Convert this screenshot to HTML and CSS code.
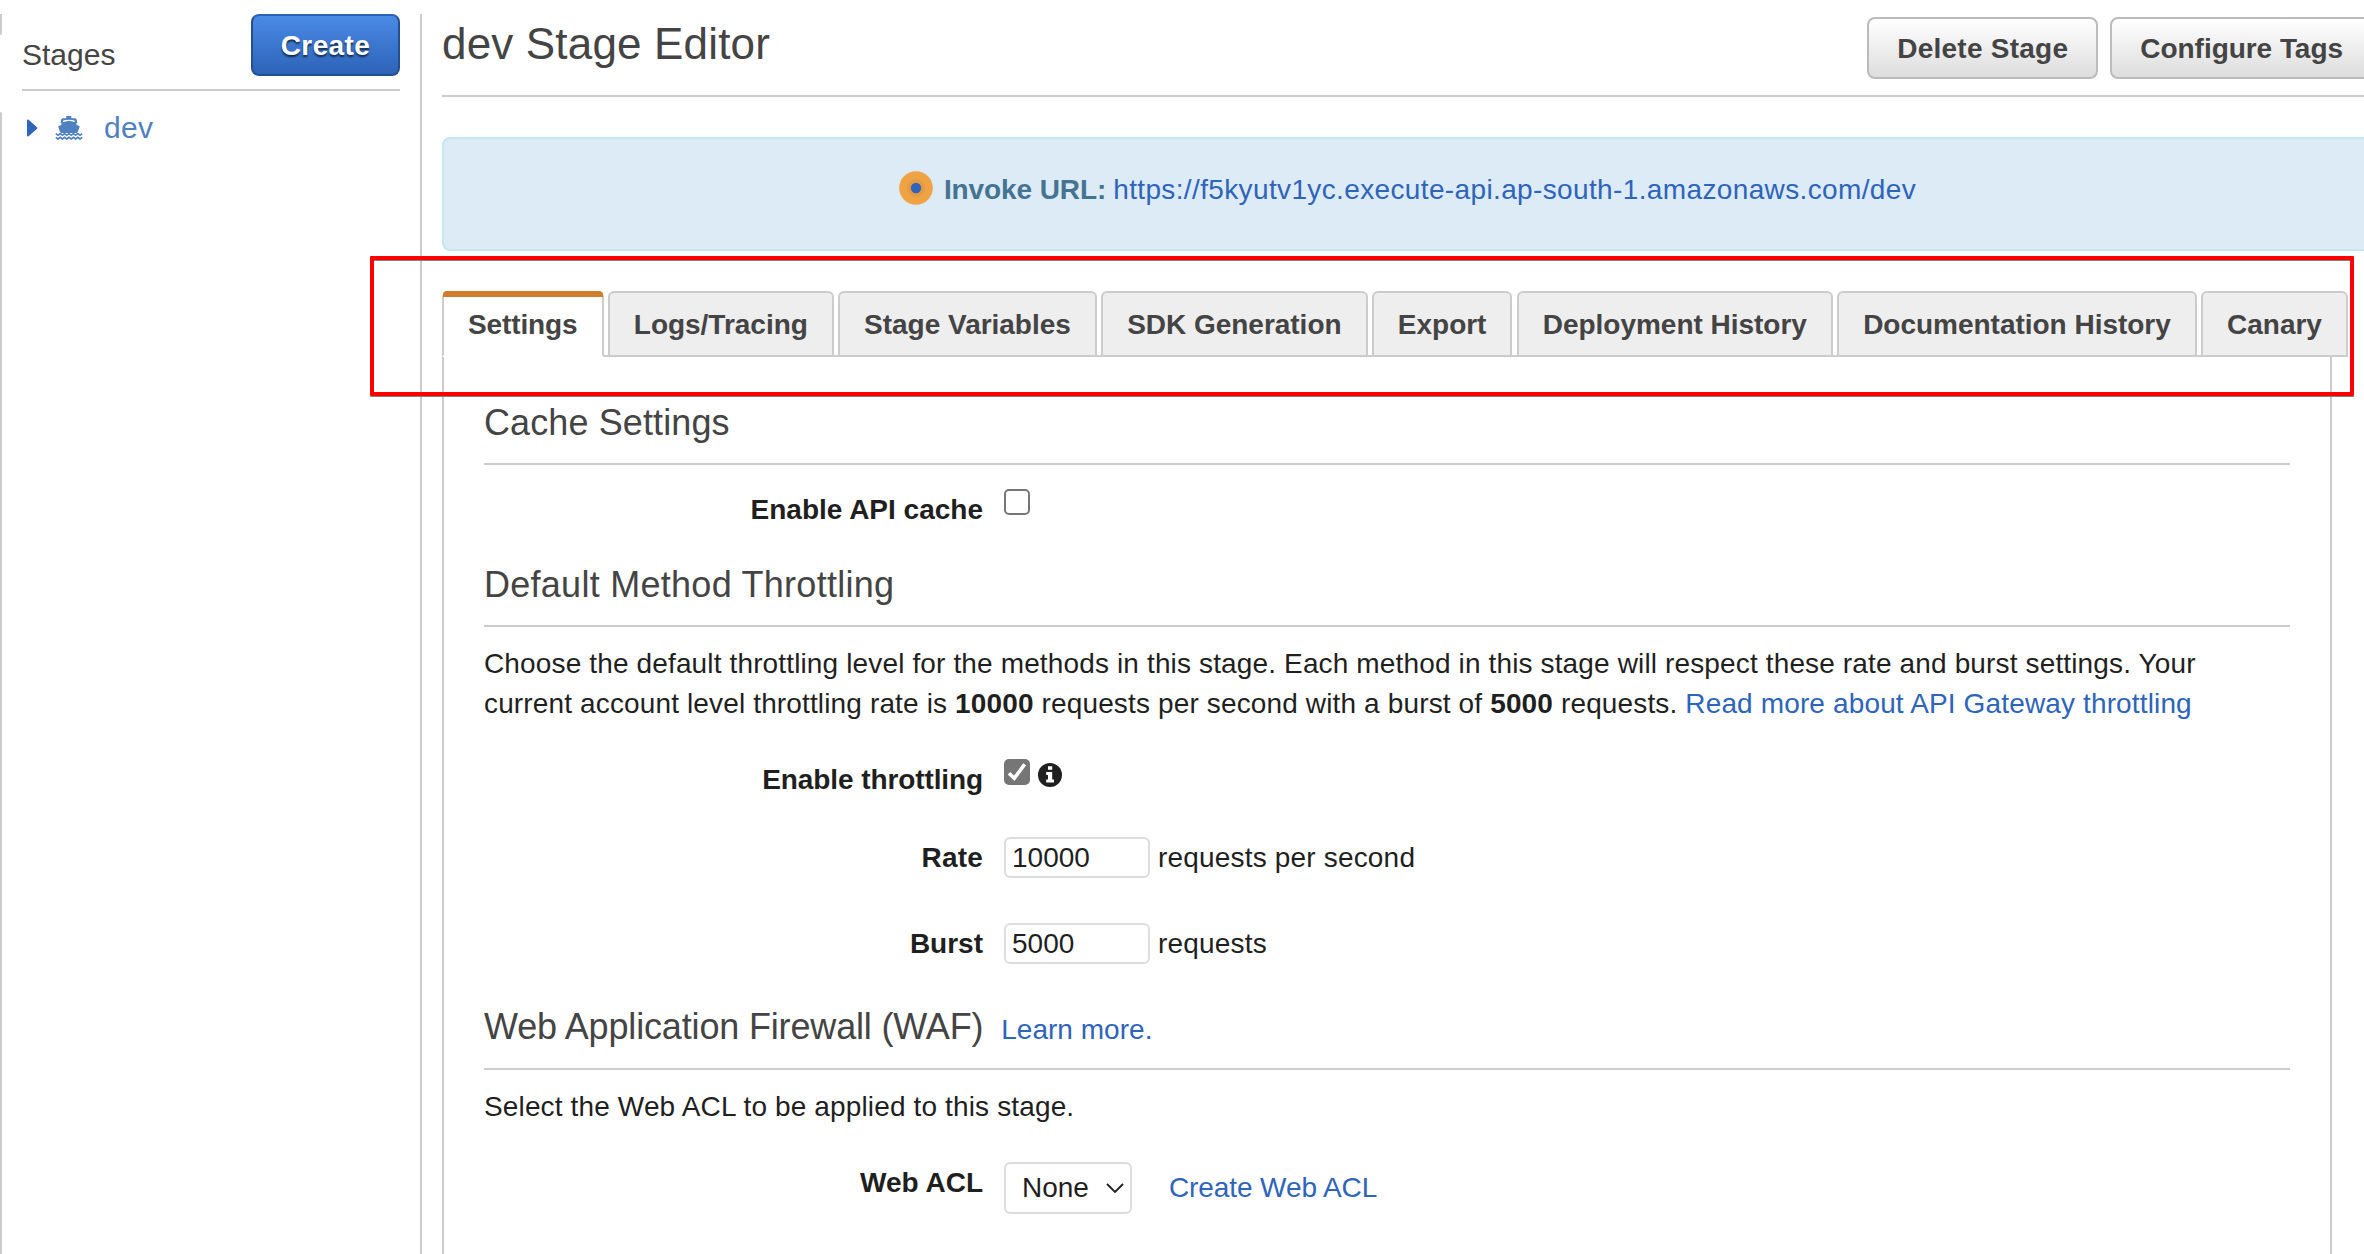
FILE: index.html
```
<!DOCTYPE html>
<html lang="en">
<head>
<meta charset="utf-8">
<title>dev Stage Editor</title>
<link rel="stylesheet" href="styles.css">
</head>
<body>
<div class="page">
  <div class="edge"><span class="edge-top"></span><span class="edge-rest"></span></div>
  <aside class="sidebar">
    <div class="sidebar-head">
      <h2 class="sidebar-title">Stages</h2>
      <button class="btn btn-primary">Create</button>
    </div>
    <div class="tree-item">
      <svg class="caret" width="11" height="18" viewBox="0 0 11 18"><path d="M0 2Q0 0 1.6 .8L10 8.2Q10.800 9 10 9.800L1.600 17.200Q0 18 0 16Z" fill="#2e64ba"/></svg>
      <svg class="ship" width="28" height="25" viewBox="0 0 28 25">
        <path d="M11.300 1h5v2.300h3.700q1.500 0 1.700 1.500l.6 3.200h-2.200l-.6-2.400q-5.500-1.500-11.200 0L7.700 8H5.500l.6-3.200q.2-1.500 1.700-1.500h3.500Z" fill="#4f80c0"/>
        <path d="M6.500 7.600L14 5.800l7.400 1.800v2.200l2.800 1.100q.6.300.4 1-1.200 4.100-2.800 6.100H6.100Q4.400 16 3.300 11.900q-.1-.7.5-1l2.700-1.100Z" fill="#4f80c0"/>
        <path d="M.8 18.600l2.200 1.700 2.200-1.700 2.200 1.700 2.200-1.700 2.200 1.700 2.200-1.700 2.200 1.700 2.200-1.700 2.200 1.700 2.200-1.700 2.200 1.700 2.200-1.700M.8 22.300l2.200 1.700 2.200-1.700 2.200 1.700 2.200-1.700 2.200 1.700 2.200-1.700 2.200 1.700 2.200-1.700 2.200 1.700 2.200-1.700 2.200 1.700 2.200-1.700" fill="none" stroke="#4f80c0" stroke-width="1.700"/>
      </svg>
      <a class="tree-label">dev</a>
    </div>
  </aside>
  <main class="main">
    <header class="header">
      <h1 class="title">dev Stage Editor</h1>
      <div class="actions">
        <button class="btn">Delete Stage</button>
        <button class="btn btn-tags">Configure Tags</button>
      </div>
    </header>
    <div class="banner">
      <svg class="beacon" width="34" height="34" viewBox="0 0 34 34"><circle cx="17" cy="17" r="16.800" fill="#f0a345"/><circle cx="17" cy="17" r="9" fill="#e39a43"/><circle cx="17" cy="17" r="5.200" fill="#2e64ba"/></svg>
      <strong class="banner-label">Invoke URL:</strong>
      <a class="banner-url">https://f5kyutv1yc.execute-api.ap-south-1.amazonaws.com/dev</a>
    </div>
    <nav class="tabs">
      <a class="tab tab-active">Settings</a>
      <a class="tab">Logs/Tracing</a>
      <a class="tab">Stage Variables</a>
      <a class="tab">SDK Generation</a>
      <a class="tab">Export</a>
      <a class="tab">Deployment History</a>
      <a class="tab">Documentation History</a>
      <a class="tab">Canary</a>
    </nav>
    <section class="panel">
      <h2 class="section-title">Cache Settings</h2>
      <div class="row row-cache">
        <label class="label">Enable API cache</label>
        <span class="check"></span>
      </div>
      <h2 class="section-title section-wide">Default Method Throttling</h2>
      <p class="text">Choose the default throttling level for the methods in this stage. Each method in this stage will respect these rate and burst settings. Your current account level throttling rate is <b>10000</b> requests per second with a burst of <b>5000</b> requests. <a class="link">Read more about API Gateway throttling</a></p>
      <div class="row row-throttle">
        <label class="label label-throttle">Enable throttling</label>
        <span class="check check-on"><svg width="26" height="26" viewBox="0 0 26 26"><path d="M5 14.200L10.300 19.300L20.700 5.200" fill="none" stroke="#fff" stroke-width="3.600"/></svg></span>
        <svg class="info" width="24" height="24" viewBox="0 0 24 24"><circle cx="12" cy="12" r="12" fill="#1f1f1f"/><path d="M10 3.200h4.200v3.500H10ZM8.200 9h6v7.600H16v3H8.200v-3H10V12H8.200Z" fill="#fff"/></svg>
      </div>
      <div class="row row-rate">
        <label class="label label-loose">Rate</label>
        <span class="input">10000</span>
        <span class="suffix">requests per second</span>
      </div>
      <div class="row row-burst">
        <label class="label">Burst</label>
        <span class="input">5000</span>
        <span class="suffix">requests</span>
      </div>
      <h2 class="section-title section-waf">Web Application Firewall (WAF) <a class="link learn">Learn more.</a></h2>
      <p class="text">Select the Web ACL to be applied to this stage.</p>
      <div class="row row-acl">
        <label class="label">Web ACL</label>
        <span class="select">None <svg width="18" height="10" viewBox="0 0 18 10"><path d="M1 1L9 9L17 1" fill="none" stroke="#1f1f1f" stroke-width="1.800"/></svg></span>
        <a class="link create-acl">Create Web ACL</a>
      </div>
    </section>
  </main>
  <div class="highlight"></div>
</div>
</body>
</html>
```
FILE: styles.css
```
* { box-sizing: border-box; }

body {
  margin: 0;
  background: #fff;
  color: #1f1f1f;
  font: 28px/40px "Liberation Sans", Arial, sans-serif;
}

h1, h2, p { margin: 0; font-weight: normal; }

.page {
  position: relative;
  display: flex;
  width: 2364px;
  height: 1254px;
  overflow: hidden;
}

/* Sidebar */
.edge {
  display: flex;
  flex: none;
  flex-direction: column;
  gap: 77px;
  width: 2px;
  padding-top: 14px;
}
.edge-top { height: 21px; background: #ccc; border-bottom-right-radius: 2px; }
.edge-rest { flex: 1; background: #ccc; border-top-right-radius: 2px; }

.sidebar {
  flex: none;
  width: 420px;
  margin-top: 14px;
  padding: 0 20px;
  border-right: 2px solid #ccc;
}
.sidebar-head {
  display: flex;
  justify-content: space-between;
  height: 77px;
  border-bottom: 2px solid #ccc;
}
.sidebar-title {
  padding-top: 21px;
  color: #444;
  font-size: 30px;
}
.tree-item {
  display: flex;
  padding: 16px 0 0 5px;
  color: #4f80c0;
}
.caret { margin-top: 12px; }
.ship { margin: 8px 0 0 17px; }
.tree-label { margin: 1px 0 0 21px; font-size: 30px; letter-spacing: .3px; }

.btn {
  height: 62px;
  padding: 2px 28px 0;
  border: 2px solid #bbb;
  border-radius: 8px;
  background: linear-gradient(#fff, #ddd);
  color: #444;
  font: bold 28px/56px "Liberation Sans", Arial, sans-serif;
  letter-spacing: .25px;
  white-space: nowrap;
}
.btn-primary {
  width: 149px;
  padding: 2px 0 0;
  border-color: #23508f;
  border-top-color: #2c61b4;
  background: linear-gradient(#4a8ae6, #2d63b8);
  color: #fff;
  letter-spacing: .4px;
  text-shadow: 0 2px 2px rgba(0, 0, 0, .65);
}
.btn-tags { letter-spacing: -.04px; }

/* Main column */
.main {
  flex: none;
  width: 1931px;
  margin-left: 20px;
}
.header {
  display: flex;
  justify-content: space-between;
  height: 97px;
  border-bottom: 2px solid #ccc;
}
.title {
  padding-top: 19px;
  color: #444;
  font-size: 44px;
  line-height: 49px;
  letter-spacing: .17px;
}
.actions { display: flex; gap: 12px; padding-top: 17px; }

.banner {
  display: flex;
  justify-content: center;
  height: 114px;
  margin-top: 40px;
  padding-top: 31px;
  border: 2px solid #c2e8f0;
  border-radius: 8px;
  background: #ddebf6;
}
.beacon { margin: 1px 11px 0 0; }
.banner-label { color: #457492; letter-spacing: -.1px; }
.banner-url { margin-left: 7px; color: #2e64ba; letter-spacing: .366px; }

.tabs {
  display: flex;
  gap: 4.3px;
  width: max-content;
  height: 66px;
  margin-top: 40px;
  border-bottom: 2px solid #ccc;
}
.tab {
  position: relative;
  height: 66px;
  padding: 1px 24px 0;
  border: 2px solid #ccc;
  border-radius: 6px 6px 0 0;
  background: #eee;
  color: #444;
  font-weight: bold;
  line-height: 62px;
  letter-spacing: -.02px;
}
.tab-active {
  background: #fff;
  border-bottom-color: #fff;
  letter-spacing: -.12px;
}
.tab-active::before {
  content: "";
  position: absolute;
  inset: -2px -1px auto;
  height: 6px;
  border-radius: 4px 4px 0 0;
  background: #d27d2d;
}

.panel {
  width: 1890px;
  height: 897px;
  padding: 45px 40px 0;
  border: solid #ccc;
  border-width: 0 2px;
}
.section-title {
  padding-bottom: 20px;
  border-bottom: 2px solid #ccc;
  color: #444;
  font-size: 36px;
  line-height: 41px;
  letter-spacing: .11px;
}
.section-wide { letter-spacing: .27px; }
.section-waf { margin-top: 42px; padding-bottom: 21px; letter-spacing: -.16px; }
.text {
  padding: 17px 60px 0 0;
  letter-spacing: .14px;
}
.link { color: #2e64ba; }
.learn { margin-left: 8px; font-size: 28px; line-height: 0; letter-spacing: .03px; }

/* Form rows */
.row { display: flex; height: 41px; line-height: 41px; }
.row-cache { margin: 24px 0 34px; }
.row-throttle { margin-top: 35px; }
.row-rate { margin-top: 37px; }
.row-burst { margin-top: 45px; }
.row-acl { height: 52px; margin-top: 35px; }
.label {
  width: 499px;
  margin-right: 21px;
  font-weight: bold;
  text-align: right;
}
.label-throttle { letter-spacing: -.1px; }
.label-loose { letter-spacing: .2px; }
.check {
  width: 26px;
  height: 26px;
  border: 2px solid #767676;
  border-radius: 5px;
}
.check-on { border: 0; background: #767676; }
.check-on svg { display: block; }
.info { margin: 4px 0 0 7.5px; }
.input {
  width: 146px;
  padding-left: 6px;
  border: 2px solid #ddd;
  border-radius: 6px;
  line-height: 37px;
}
.suffix { margin-left: 8px; letter-spacing: .18px; }
.select {
  display: flex;
  align-items: center;
  justify-content: space-between;
  width: 128px;
  padding: 0 6px 0 16px;
  border: 2px solid #ddd;
  border-radius: 6px;
  line-height: 48px;
}
.create-acl { margin-left: 37px; line-height: 52px; letter-spacing: -.1px; }

/* Annotation frame over the tab bar */
.highlight {
  position: absolute;
  left: 370px;
  top: 256px;
  width: 1984px;
  height: 140px;
  border: 4px solid #f00;
  border-radius: 1px;
  box-shadow: 0 1px #808080, inset 0 1px #808080;
}
```
